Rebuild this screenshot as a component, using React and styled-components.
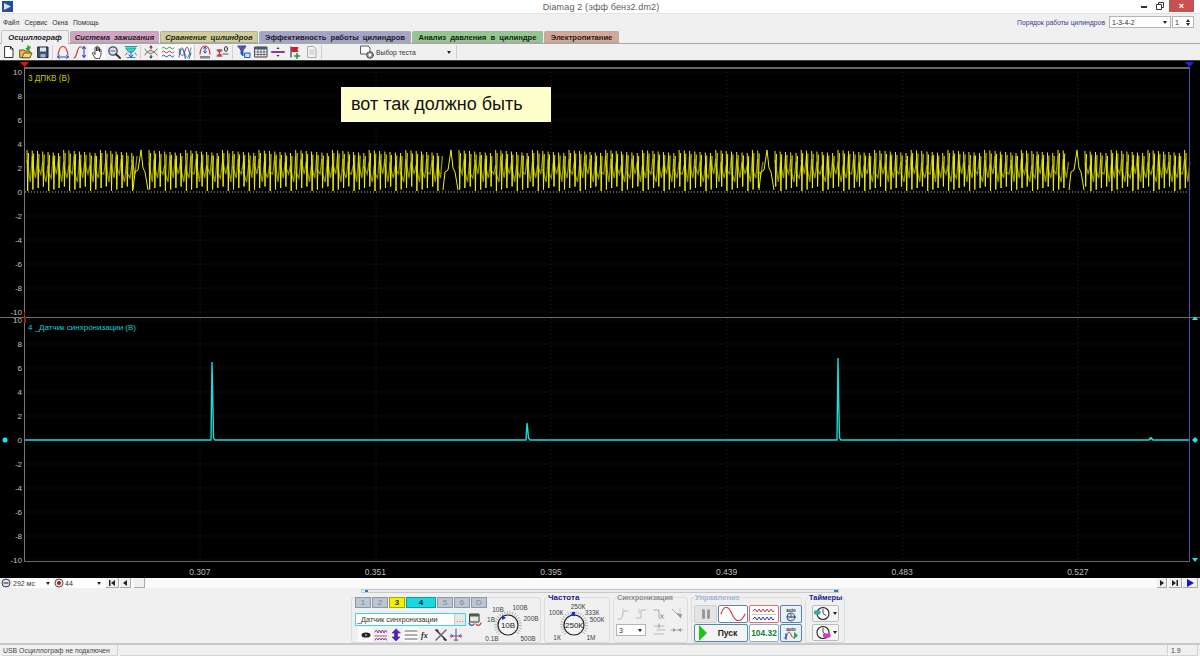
import React from 'react';
import styled, { createGlobalStyle } from 'styled-components';

const Global = createGlobalStyle`
  html, body { margin: 0; padding: 0; background: #f0f0f0; overflow: hidden; }
  * { box-sizing: border-box; }
`;
const Root = styled.div`
  width: 1200px; height: 656px; display: flex; flex-direction: column; background: #f0f0f0;
  font-family: "Liberation Sans", Arial, sans-serif; font-size: 7px; color: #333; overflow: hidden;
`;
const TitleBar = styled.div`
  height: 14px; background: #fff; display: grid; grid-template-columns: 1fr auto 1fr; align-items: center;
  padding-left: 2px; border-bottom: 1px solid #e4e4e4;
`;
const Title = styled.div`font-size: 9px; color: #5c5c5c; margin-top: 1px; letter-spacing: 0.15px;`;
const WinButtons = styled.div`justify-self: end; display: flex; align-items: flex-start; height: 13px; padding-right: 6px;`;
const WinBtn = styled.div`width: 16px; height: 12px; display: flex; align-items: center; justify-content: center;`;
const CloseBtn = styled.div`
  width: 25px; height: 12px; margin-left: 1px; background: #c75050; color: #fff; font-size: 9px; font-weight: bold;
  display: flex; align-items: center; justify-content: center;
`;
const MenuBar = styled.div`height: 16px; display: flex; align-items: center; padding-left: 3px; gap: 5px;`;
const MenuItem = styled.span`color: #333; font-size: 6.7px;`;
const Spacer = styled.div`flex: 1;`;
const OrderLabel = styled.span`color: #3a3a9c; font-size: 6.8px; margin-right: 3px;`;
const SelectBox = styled.div`
  width: ${p => p.$w}px; height: ${p => p.$h || 12}px; background: #fff; border: 1px solid ${p => p.$border || '#b4b4b4'};
  display: flex; align-items: center; justify-content: space-between; padding: 0 3px 0 2px; font-size: 7px; color: #333;
`;
const Caret = styled.i`
  width: 0; height: 0; border-left: 2.5px solid transparent; border-right: 2.5px solid transparent;
  border-top: 3px solid #222; display: block;
`;
const SpinWrap = styled.div`display: flex; flex-direction: column; gap: 1px;`;
const CaretUp = styled(Caret)`border-top: 0; border-bottom: 3px solid #222;`;
const RightControls = styled.div`display: flex; align-items: center; gap: 1px; padding-right: 6px;`;
const TabRow = styled.div`height: 14px; display: flex; align-items: flex-end; padding-left: 1px; gap: 1px; position: relative; border-bottom: 1px solid #a8a8a8;`;
const Tab = styled.div`
  width: ${p => p.$w}px; height: ${p => p.$active ? 14 : 12}px; background: ${p => p.$bg};
  border: 1px solid ${p => p.$active ? '#c4c4c4' : '#b0b0b0'}; border-bottom: ${p => p.$active ? '0' : '1px solid #a8a8a8'};
  margin-bottom: ${p => p.$active ? -1 : 0}px; position: relative;
  border-radius: 2px 2px 0 0; font-size: 7.6px; font-weight: bold; font-style: ${p => p.$it ? 'italic' : 'normal'};
  color: #1c1c1c; display: flex; align-items: center; justify-content: center; white-space: nowrap; word-spacing: 2px;
`;
const Toolbar = styled.div`height: 16px; display: flex; align-items: center; padding-left: 0; background: #f0f0f0;`;
const TB = styled.div`
  width: ${p => p.$w || 17}px; height: 15px; display: flex; align-items: center; justify-content: center; flex: none;
  background: ${p => p.$on ? '#fafafa' : 'transparent'};
`;
const Sep = styled.div`width: 1px; height: 14px; background: #d0d0d0; margin: 0 ${p => p.$m || 1}px; flex: none;`;
const TestPick = styled.div`
  width: 79px; display: flex; align-items: center; font-size: 6.8px; color: #333; gap: 3px; flex: none; padding-right: 4px;
`;
const TestLabel = styled.span`flex: 1; white-space: nowrap;`;
const Plot = styled.div`height: 518px; background: #000; position: relative; border-top: 1px solid #444; flex: none;`;
const PaneSvg = styled.svg`display: block;`;
const Note = styled.div`
  position: absolute; left: 341px; top: 26px; width: 210px; height: 35px; background: #ffffcc; color: #111;
  font-size: 18px; padding-left: 10px; display: flex; align-items: center;
`;
const XAxis = styled.div`
  height: 13px; display: grid; grid-template-columns: repeat(6, 175.6px); padding-left: 112px; color: #bdbdbd; font-size: 8.5px;
  align-items: center; text-align: center;
`;
const NavRow = styled.div`height: 10px; background: #fafafa; display: flex; align-items: center; flex: none;`;
const NavIcon = styled.div`width: ${p => p.$w || 12}px; height: 10px; display: flex; align-items: center; justify-content: center; background: #f0f0f0; flex: none;`;
const NavSelect = styled.div`
  width: ${p => p.$w}px; height: 10px; background: #fff; display: flex; align-items: center; justify-content: space-between;
  padding: 0 3px 0 1px; font-size: 7px; color: #333; flex: none;
`;
const NavBtn = styled.div`
  width: ${p => p.$w || 12}px; height: 10px; margin-left: ${p => p.$ml || 0}px; background: #f0f0f0;
  border-right: 1px solid #aaa; border-bottom: 1px solid #aaa; display: flex; align-items: center; justify-content: center; flex: none;
`;
const Track = styled.div`flex: 1; height: 10px; background: #fbfbfb;`;
const Workspace = styled.div`flex: 1; display: flex; flex-direction: column; padding-left: 351px; min-height: 0;`;
const Slider = styled.div`
  width: 478px; height: 4px; margin: 1px 0 0 10px; background: #e4ecf5; border: 1px solid #c8c8c8; position: relative;
`;
const SliderDotL = styled.i`position: absolute; left: 3px; top: 0; width: 3px; height: 2px; background: #3a6fd0;`;
const SliderDotR = styled.i`position: absolute; right: 0; top: 0; width: 4px; height: 2px; background: #3a6fd0;`;
const Panels = styled.div`display: flex; gap: 3px; margin-top: 4px; align-items: flex-start;`;
const Group = styled.div`
  width: ${p => p.$w}px; height: 46px; border: 1px solid #dcdcdc; border-radius: 3px; position: relative; flex: none;
`;
const GroupTitle = styled.div`
  position: absolute; left: ${p => p.$l || 2}px; top: -5px; font-size: ${p => p.$s || 8}px; font-weight: bold; background: #f0f0f0; padding: 0 1px;
  color: ${p => p.$c}; white-space: nowrap;
`;
const ChannelInner = styled.div`display: flex; height: 100%;`;
const ChannelCol = styled.div`width: 135px; display: flex; flex-direction: column; padding: 0 0 0 3px; margin-top: -1px;`;
const ChanRow = styled.div`display: flex; gap: 1px; height: 11px; margin-bottom: 5px;`;
const Chan = styled.div`
  width: ${p => p.$w || 16}px; height: 11px; background: ${p => p.$bg || '#bcc6d2'}; border: 1px solid ${p => p.$b || '#8b9aab'};
  color: ${p => p.$fg || '#858585'}; font-size: 8px; font-weight: ${p => p.$bold ? 'bold' : 'normal'};
  display: flex; align-items: center; justify-content: center;
`;
const ComboRow = styled.div`display: flex; align-items: center; gap: 2px; height: 13px;`;
const Combo = styled.div`
  width: 111px; height: 13px; background: #fff; border: 1px solid #40d8e0; display: flex; align-items: center; justify-content: space-between;
  font-size: 7.3px; padding-left: 1px; color: #333; white-space: nowrap;
`;
const ComboBtn = styled.div`width: 11px; height: 11px; background: #e8e8e8; border-left: 1px solid #ccc; display: flex; align-items: center; justify-content: center; color: #555; font-size: 8px;`;
const IconRow = styled.div`display: flex; align-items: center; margin: 1px 0 0 3px; height: 15px;`;
const IconCell = styled(TB)`width: 15px;`;
const Knob = styled.svg`display: block; flex: none; overflow: visible;`;
const GroupFlex = styled.div`display: flex; justify-content: center; padding-top: 0;`;
const SyncGrid = styled.div`
  display: grid; grid-template-columns: repeat(4, 18px); grid-auto-rows: 16px; align-items: center; justify-items: center;
  padding: 8px 0 0 0;
`;
const SyncSelect = styled(SelectBox)`grid-column: span 2; justify-self: start; margin-left: 2px;`;
const CtlGrid = styled.div`
  display: grid; grid-template-columns: 23px 30px 30px 22px; grid-template-rows: 18px 18px; gap: 1px; padding: 7px 0 0 2px;
`;
const CtlBtn = styled.div`
  grid-column: ${p => p.$span ? `span ${p.$span}` : 'auto'};
  background: ${p => p.$bg || '#fff'}; border: 1px solid ${p => p.$b || '#5d84a8'}; border-radius: 2px;
  display: flex; align-items: center; justify-content: center; gap: ${p => p.$gap || 0}px;
`;
const PlaySlot = styled.span`width: 3px;`;
const Pusk = styled.span`flex: 1; text-align: center; font-size: 8.5px; font-weight: bold; color: #222;`;
const Freq = styled.span`font-size: 8.4px; font-weight: bold; color: #0a7f30;`;
const TimerCol = styled.div`display: flex; flex-direction: column; gap: 2px; align-items: center; padding-top: 7px;`;
const TimerBtn = styled.div`
  width: 27px; height: 17px; background: #f5f5f5; border: 1px solid #bcbcbc; border-radius: 2px; display: flex; align-items: center; justify-content: center; gap: 2px;
`;
const StatusBar = styled.div`height: 13px; border-top: 2px solid #c8c8c8; display: flex; gap: 2px; padding: 0 2px; flex: none;`;
const StatusCell = styled.div`
  width: ${p => p.$w ? `${p.$w}px` : 'auto'}; flex: ${p => p.$w ? 'none' : 1}; border: 1px solid #d4d4d4; border-width: 0 1px 1px 0;
  font-size: 6.9px; color: #444; display: flex; align-items: center; padding-left: 1px; white-space: nowrap;
`;

const I = ({ w = 14, h = 14, children }) => (
  <svg width={w} height={h} viewBox={`0 0 ${w} ${h}`} fill="none" strokeLinecap="round" strokeLinejoin="round">{children}</svg>
);
const R = '#d23a3a', B = '#2255cc', G = '#2a9a5a', P = '#8a3aa8', C = '#18a0a8', K = '#333';

const Icons = {
  file: <I><path d="M3 1.500h5.500L11 4v8.500H3z" fill="#fff" stroke={K} /><path d="M8.500 1.500V4H11" stroke={K} /></I>,
  open: <I><path d="M1 5h4l1 1h5v6.500H1z" fill="#e8b84a" stroke="#6b5518" /><path d="M3 12.500 5 8h8l-2 4.500z" fill="#f5d67a" stroke="#6b5518" /><path d="M9 1v4M7.500 3.500 9 5l2-3" stroke="#2a9a2a" strokeWidth="1.600" /></I>,
  save: <I><path d="M2 2h10v10.500H2z" fill="#3d5575" stroke="#223" /><path d="M4 2.500h6v4H4z" fill="#dfe6ee" /><path d="M4.500 9h5v3.500h-5z" fill="#9fb2c8" /></I>,
  arc: <I><path d="M2 10C3 3 5 1.500 7 1.500S11 3 12 10" stroke={R} strokeWidth="1.200" /><path d="M1.500 12h11M1.500 12l2-1.500M1.500 12l2 1.500M12.500 12l-2-1.500M12.500 12l-2 1.500" stroke={B} /></I>,
  arcV: <I><path d="M1 13C4 13 4 2 7 2c1 0 1.500 0 2 0" stroke={R} strokeWidth="1.200" /><path d="M11 1.500v11M11 1.500 9.500 3.500M11 1.500l1.500 2M11 12.500l-1.500-2M11 12.500l1.500-2" stroke={B} strokeWidth="1.100" /></I>,
  hand: <I><path d="M5 13 2.500 8.500c-.5-1 .8-1.500 1.500-.5l1 1.500V3c0-1 1.500-1 1.500 0v3-4c0-1 1.500-1 1.500 0v4-3c0-1 1.500-1 1.500 0v4-2c0-1 1.500-1 1.500 0v4c0 2-1 3-1.500 4.500z" fill="#fff" stroke="#333" strokeWidth=".9" /></I>,
  zoom: <I><circle cx="6" cy="6" r="4.200" fill="#cfe4f5" stroke="#34506a" strokeWidth="1.300" /><path d="M9 9.200l4 3.800" stroke="#333" strokeWidth="2" /><path d="M4 6h4" stroke={R} /></I>,
  cyanFit: <I><path d="M2 3h10L9 7H5z" fill="#3ad6c6" stroke={C} /><path d="M1 1.500h12M3 12.500h8" stroke={C} /><path d="M7 7v5M5 10l2 2.500 2-2.500" stroke={B} /><path d="M3 8l-1.500 2M11 8l1.500 2" stroke={R} /></I>,
  cross: <I><path d="M1 4C4 10 9 10 13 4" stroke={G} /><path d="M1 10C4 4 9 4 13 10" stroke={R} /><path d="M7 1v3M7 10v3" stroke={K} /><path d="M6 2.500 7 1l1 1.500M6 11.500 7 13l1-1.500" stroke={K} /></I>,
  waves3: <I><path d="M1 3q1.500-2 3 0t3 0 3 0 3 0" stroke={G} /><path d="M1 7q1.500-2 3 0t3 0 3 0 3 0" stroke={R} /><path d="M1 11q1.500-2 3 0t3 0 3 0 3 0" stroke={B} /></I>,
  wavesOver: <I><path d="M1 12C3 1 5 1 7 12s4 1 6-4" stroke={B} /><path d="M1 8c2-8 4-6 6 1s4 3 6-6" stroke={G} /><path d="M1 4c2 8 4 9 6 2s3-4 5 4" stroke={P} /></I>,
  auto: <I><path d="M2 9C2 3 5 1 7 1s5 2 5 8" stroke={R} strokeWidth="1.200" /><path d="M7 2v6M5.500 3.500 7 2l1.500 1.500M5.500 6.500 7 8l1.500-1.500" stroke={B} /><path d="M2 11h10v2.500H2z" fill="#888" /></I>,
  sigma: <I><path d="M2 5h5M2 11h5" stroke={K} /><path d="M4.500 5v6M3 6.500 4.500 5 6 6.500M3 9.500 4.500 11 6 9.500" stroke={R} strokeWidth="1.200" /><path d="M8 9h5" stroke="#555" /><ellipse cx="11" cy="4" rx="1.500" ry="2.500" stroke="#333" /></I>,
  filter: <I><path d="M1 1h8L6 5.500V11L4 9V5.500z" fill={B} stroke={B} /><path d="M3 1.500l3 3" stroke={R} strokeWidth="1.300" /><path d="M8 8h5v4.500H8z" fill="#cfe0f4" stroke={B} /></I>,
  table: <I><path d="M1 2h12v10H1z" fill="#fff" stroke="#444" /><path d="M1 2h12v2.500H1z" fill="#3c5a96" /><path d="M4 2v10M7 2v10M10 2v10M1 7h12M1 9.500h12" stroke="#555" strokeWidth=".8" /></I>,
  divide: <I><path d="M1 7h12" stroke={P} strokeWidth="2" /><path d="M5.500 4 7 2l1.500 2zM5.500 10 7 12l1.500-2z" fill="#333" /></I>,
  flag: <I><path d="M3 2v10" stroke="#444" strokeWidth="1.300" /><path d="M3.500 2h7l-1 2.500 1 2.500h-7z" fill="#d81830" /><path d="M9 8.500v5M6.500 11h5" stroke="#1a9a2a" strokeWidth="1.500" /></I>,
  page: <I><path d="M3 1.500h5.500L11 4v8.500H3z" fill="#f4f4f4" stroke="#a8a8a8" /><path d="M5 5h4M5 7h4M5 9h4" stroke="#bdbdbd" /></I>,
  gear: <I w={18}><path d="M3 1h7l2 2v6H3z" fill="#fff" stroke="#555" /><circle cx="12" cy="10" r="3.300" fill="#aaa" stroke="#444" /><circle cx="12" cy="10" r="1.200" fill="#fff" /></I>,
  eye: <I><ellipse cx="7" cy="7" rx="4.500" ry="2.600" fill="#222" /><circle cx="7" cy="7" r="1.200" fill="#888" /></I>,
  noise: <I><path d="M1 4l1.500-2 1.500 3 1.500-3 1.500 3 1.500-3 1.500 3 1.500-3 1 2" stroke={P} /><path d="M1 8h12" stroke={R} strokeDasharray="1.500 1" /><path d="M1 12l1.500-2 1.500 2 1.500-2 1.500 2 1.500-2 1.500 2 1.500-2 1 2" stroke={P} /></I>,
  updown: <I><path d="M7 1 3 5h2.500v4H3l4 4 4-4H8.500V5H11z" fill="#3a2ab8" stroke="#7a1a9a" strokeWidth=".7" /></I>,
  lines: <I><path d="M1 3h12M1 7h12M1 11h12" stroke="#666" strokeWidth="1.100" /></I>,
  tools: <I><path d="M2 2l10 10" stroke="#445" strokeWidth="1.600" /><path d="M12 2 2 12" stroke="#7a6a78" strokeWidth="1.600" /><path d="M2 2h2v2M12 12h-2v-2" stroke="#223" /></I>,
  axis: <I><path d="M1 8h12" stroke={R} /><path d="M7 1v12" stroke={B} /><path d="M2 6.500 4 8 2 9.500M12 6.500 10 8l2 1.500" stroke={B} /><path d="M5 12h4" stroke={R} /></I>,
  meter: <I><path d="M2 1h9v8H2z" fill="#e8e8e8" stroke="#333" /><path d="M2 1h9v2.500H2z" fill="#3a6a3a" /><path d="M1 10c1 3 4 3 5 1" stroke={B} strokeWidth="1.300" /><path d="M13 10c-1 3-4 3-5 1" stroke={R} strokeWidth="1.300" /></I>,
  s1: <I><path d="M2 12h3c2 0 1-8 4-8h3" stroke="#b8b8b8" /><path d="M7 1v6" stroke="#c8c8c8" /></I>,
  s2: <I><path d="M2 11h5V3h5" stroke="#b8b8b8" /><path d="M5 2v5" stroke="#c8c8c8" /></I>,
  s3: <I><path d="M2 3h5v8h5" stroke="#aaa" /><path d="M9 8l1 2 1-2" stroke="#888" /></I>,
  s4: <I><path d="M2 2l9 9" stroke="#aaa" /><path d="M6 6l5 5 1-4z" fill="#999" /><path d="M10 1v5" stroke="#ccc" /></I>,
  s5: <I><path d="M2 3h10M5 7h8M2 11h10" stroke="#b8b8b8" /><path d="M7 1v4" stroke="#999" /></I>,
  s6: <I><path d="M1 7h12" stroke="#b0b0b0" /><path d="M3 5l3 2-3 2zM11 5 8 7l3 2z" fill="#999" /></I>,
};

const Pause = () => <I w={12} h={14}><rect x="2" y="2" width="3" height="10" rx="1.500" fill="#9a9a9a" /><rect x="7" y="2" width="3" height="10" rx="1.500" fill="#9a9a9a" /></I>;
const SineBtn = () => <I w={26} h={14}><path d="M1 7C4-2 8-2 12 7s9 9 13 0" stroke="#d23a3a" strokeWidth="1.100" /></I>;
const DoubleWave = () => <I w={26} h={15}><path d="M2 4l2-2 2 3 2-3 2 3 2-3 2 3 2-3 2 3 2-3 2 3 1-1" stroke="#c83a3a" /><path d="M1 7.500h24" stroke="#c8c8c8" /><path d="M2 12l2-2 2 3 2-3 2 3 2-3 2 3 2-3 2 3 2-3 2 3 1-1" stroke="#2a3ac8" /></I>;
const AutoLabel = () => <text x="8" y="4.500" fontSize="4.500" fontWeight="bold" textAnchor="middle" fill="#333" fontFamily="Liberation Sans, Arial, sans-serif">auto</text>;
const AutoTop = () => <I w={16} h={15}><AutoLabel /><circle cx="8" cy="10" r="4" fill="#cfe0f0" stroke="#34506a" /><path d="M8 10V7.500" stroke="#c83a3a" /><path d="M4 10h8" stroke="#2a3ac8" /></I>;
const AutoRun = () => <I w={16} h={15}><AutoLabel /><path d="M1 12c3 2 3-6 5-6s2 6 5 6" stroke="#c83a3a" /><path d="M3 8v5" stroke="#2255cc" strokeWidth="1.500" /><path d="M11 6v7l4-3.500z" fill="#1fae3c" /></I>;
const Play = () => <I w={10} h={16}><path d="M1 0v16l8-8z" fill="#18c818" /></I>;
const Clock = ({ mark, markPos }) => (
  <I w={17} h={15}>
    <circle cx="9" cy="7.500" r="6" fill="#fff" stroke="#222" strokeWidth="1.100" />
    <path d="M9 3v4.500l3 2" stroke="#444" />
    <path d={markPos} fill={mark} stroke={mark} />
  </I>
);
const Glyph = ({ d, c = '#222' }) => <I w={8} h={8}><path d={d} fill={c} /></I>;

const TABS = [
  { t: 'Осциллограф', w: 68, bg: '#f0f0f0', active: true, it: true },
  { t: 'Система зажигания', w: 89, bg: '#d3a2c6', it: true },
  { t: 'Сравнение цилиндров', w: 98, bg: '#d0cd96', it: true },
  { t: 'Эффективность работы цилиндров', w: 152, bg: '#a6a3cb' },
  { t: 'Анализ давления в цилиндре', w: 131, bg: '#90c98b' },
  { t: 'Электропитание', w: 75, bg: '#d6a794' },
];

const TICKS_X = [200, 376, 551, 727, 903, 1078];
const yLabel = [10, 8, 6, 4, 2, 0, -2, -4, -6, -8, -10];

function yellowPaths() {
  const gaps = [141, 451, 767, 1077];
  const step = 5.24;
  let bright = '', dim = '';
  let x = 27, i = 0;
  while (x < 1187) {
    const g = gaps.find(v => x > v - 9 && x < v + 8);
    if (g !== undefined) {
      bright += `M${g - 8} 190 L${g - 6} 172 L${g - 3} 170 L${g} 150 L${g + 2} 168 L${g + 4} 172 L${g + 7} 190 `;
      x = g + 8;
      continue;
    }
    const top = 150 + (i % 7) * 0.5;
    const bot = 191 - (i % 4) * 1.5;
    bright += `M${x.toFixed(1)} ${top} L${(x + 0.7).toFixed(1)} ${bot} L${(x + 1.5).toFixed(1)} ${top + 3} `;
    const m = x + step / 2;
    dim += `M${x.toFixed(1)} ${160 + (i % 5) * 3} L${(m + 0.7).toFixed(1)} ${182 - (i % 3) * 4} L${(x + step).toFixed(1)} ${156 + (i % 4) * 3} `;
    x += step;
    i++;
  }
  return { bright, dim };
}
const Y = yellowPaths();

function cyanPath() {
  const spikes = [[212, 362, 400], [527, 423, 430], [838, 358, 405], [1150, 438, 439]];
  let d = 'M25 440 ';
  for (const [sx, sy, mid] of spikes) {
    d += `L${sx - 1} 440 L${sx} ${sy} L${sx + 0.8} ${mid} L${sx + 1.500} 438 L${sx + 3} 440 `;
  }
  d += 'L1189 440';
  return d;
}

const Grid = ({ y0, yEnd, offset }) => (
  <g stroke="#232323" strokeDasharray="1 3">
    {TICKS_X.map(x => <line key={x} x1={x} x2={x} y1={y0} y2={yEnd} />)}
    {yLabel.map(v => <line key={v} x1={25} x2={1188} y1={offset - v * 12} y2={offset - v * 12} />)}
  </g>
);
const Labels = ({ offset }) => (
  <g fill="#c4c4c4" fontSize="8" textAnchor="end" fontFamily="Liberation Sans, Arial, sans-serif">
    {yLabel.map(v => <text key={v} x={22} y={offset - v * 12 + 3}>{v}</text>)}
  </g>
);

const PaneTop = () => (
  <PaneSvg width="1200" height="256" viewBox="0 61 1200 256">
    <Grid y0={68} yEnd={316} offset={192} />
    <line x1="25" x2="1189" y1="192" y2="192" stroke="#aaa" strokeDasharray="1 2" />
    <path d={Y.dim} stroke="#8f8f00" strokeWidth="1.300" fill="none" />
    <path d={Y.bright} stroke="#f0f000" strokeWidth="1" fill="none" />
    <rect x="24" y="67" width="1165" height="2" fill="#666" />
    <rect x="24" y="67" width="1" height="250" fill="#777" />
    <rect x="1189" y="67" width="1" height="250" fill="#5050b0" />
    <path d="M20 62h9l-4.500 5z" fill="#e01010" />
    <path d="M1185 62h9l-4.500 5z" fill="#2020f0" />
    <rect x="24" y="312" width="1" height="4" fill="#c01010" />
    <Labels offset={192} />
    <text x="28" y="81" fill="#c8c800" fontSize="8.200" fontFamily="Liberation Sans, Arial, sans-serif">3 ДПКВ (В)</text>
  </PaneSvg>
);
const PaneBottom = () => (
  <PaneSvg width="1200" height="248" viewBox="0 317 1200 248">
    <Grid y0={318} yEnd={562} offset={440} />
    <path d={cyanPath()} stroke="#12dede" strokeWidth="1.400" fill="none" />
    <rect x="0" y="317" width="1200" height="1" fill="#6e6e6e" />
    <rect x="24" y="317" width="1" height="245" fill="#777" />
    <rect x="1189" y="317" width="1" height="245" fill="#5050b0" />
    <rect x="24" y="561" width="1166" height="1" fill="#666" />
    <rect x="24" y="317" width="2" height="6" fill="#a01818" />
    <circle cx="5" cy="440" r="2.500" fill="#18e8f0" />
    <path d="M1195 437l3 3-3 3-3-3z" fill="#18e8f0" />
    <path d="M1192 320h6l-3-4z" fill="#18e8f0" />
    <path d="M1192 558h6l-3 4z" fill="#18e8f0" />
    <Labels offset={440} />
    <text x="28" y="330" fill="#10cfcf" fontSize="8" fontFamily="Liberation Sans, Arial, sans-serif">4 _Датчик синхронизации (В)</text>
  </PaneSvg>
);

const Dial = ({ w, h, cx, cy, center, labels, needle }) => {
  const ticks = [];
  for (let a = 135; a <= 405; a += 12) {
    const rad = (a * Math.PI) / 180;
    ticks.push(<line key={a} x1={cx + Math.cos(rad) * 11} y1={cy + Math.sin(rad) * 11} x2={cx + Math.cos(rad) * 14} y2={cy + Math.sin(rad) * 14} stroke="#b0b0b0" />);
  }
  return (
    <Knob width={w} height={h} viewBox={`0 0 ${w} ${h}`}>
      {ticks}
      <circle cx={cx} cy={cy} r="10" fill="#f4f4f4" stroke="#222" strokeWidth="1.200" />
      <path d={needle} fill="#2030d0" />
      <text x={cx} y={cy + 3} fontSize="8" textAnchor="middle" fill="#222" fontFamily="Liberation Sans, Arial, sans-serif">{center}</text>
      {labels.map(([t, x, y]) => (
        <text key={t} x={x} y={y} fontSize="6.500" fill="#444" textAnchor="middle" fontFamily="Liberation Sans, Arial, sans-serif">{t}</text>
      ))}
    </Knob>
  );
};

export default function App() {
  return (
    <Root>
      <Global />
      <TitleBar>
        <svg width="11" height="11" viewBox="0 0 11 11"><rect width="11" height="11" fill="#1f4fa0" /><path d="M2 2l7 3.500-7 3.500z" fill="#cfe2ff" /><path d="M1 9h4" stroke="#d03030" /></svg>
        <Title>Diamag 2 (эфф бенз2.dm2)</Title>
        <WinButtons>
          <WinBtn><svg width="6" height="3"><rect y="1" width="6" height="2" fill="#333" /></svg></WinBtn>
          <WinBtn><svg width="8" height="8"><path d="M.5 2.500h5v5h-5zM2.500 2.500v-2h5v5h-2" stroke="#333" fill="none" /></svg></WinBtn>
          <CloseBtn>×</CloseBtn>
        </WinButtons>
      </TitleBar>
      <MenuBar>
        <MenuItem>Файл</MenuItem><MenuItem>Сервис</MenuItem><MenuItem>Окна</MenuItem><MenuItem>Помощь</MenuItem>
        <Spacer />
        <RightControls>
          <OrderLabel>Порядок работы цилиндров</OrderLabel>
          <SelectBox $w={62}>1-3-4-2<Caret /></SelectBox>
          <SelectBox $w={22}>1<SpinWrap><CaretUp /><Caret /></SpinWrap></SelectBox>
        </RightControls>
      </MenuBar>
      <TabRow>
        {TABS.map(t => <Tab key={t.t} $w={t.w} $bg={t.bg} $active={t.active} $it={t.it}>{t.t}</Tab>)}
      </TabRow>
      <Toolbar>
        <TB $w={17}>{Icons.file}</TB><TB>{Icons.open}</TB><TB>{Icons.save}</TB>
        <Sep />
        <TB>{Icons.arc}</TB><TB>{Icons.arcV}</TB><TB $on>{Icons.hand}</TB><TB>{Icons.zoom}</TB><TB>{Icons.cyanFit}</TB>
        <Sep />
        <TB>{Icons.cross}</TB><TB $on>{Icons.waves3}</TB><TB $on>{Icons.wavesOver}</TB>
        <Sep />
        <TB>{Icons.auto}</TB><TB>{Icons.sigma}</TB>
        <Sep $m={2} />
        <TB>{Icons.filter}</TB><TB>{Icons.table}</TB><TB>{Icons.divide}</TB><TB>{Icons.flag}</TB><TB>{Icons.page}</TB>
        <Sep />
        <TB $w={35}>&nbsp;</TB>
        <TB $w={18}>{Icons.gear}</TB>
        <TestPick><TestLabel>Выбор теста</TestLabel><Caret /></TestPick>
        <Sep />
      </Toolbar>
      <Plot>
        <PaneTop />
        <PaneBottom />
        <XAxis>{['0.307', '0.351', '0.395', '0.439', '0.483', '0.527'].map(t => <span key={t}>{t}</span>)}</XAxis>
        <Note>вот так должно быть</Note>
      </Plot>
      <NavRow>
        <NavIcon><svg width="10" height="10"><circle cx="5" cy="5" r="4" fill="#dfe4ea" stroke="#34405a" /><path d="M2.500 5h5" stroke="#222" /></svg></NavIcon>
        <NavSelect $w={41}>292 мс<Caret /></NavSelect>
        <NavIcon $w={1} />
        <NavIcon $w={10}><svg width="10" height="10"><circle cx="5" cy="5" r="4" fill="#e8e8e8" stroke="#555" /><circle cx="5" cy="5" r="2" fill="#c01818" /></svg></NavIcon>
        <NavSelect $w={40}>44<Caret /></NavSelect>
        <NavBtn $w={13} $ml={2}><Glyph d="M1 1h1.500v6H1zM7 1v6L3 4z" /></NavBtn>
        <NavBtn $w={11} $ml={1}><Glyph d="M6 1v6L2 4z" /></NavBtn>
        <NavBtn $w={11} $ml={3} />
        <Track />
        <NavBtn $w={10}><Glyph d="M2 1v6l4-3z" /></NavBtn>
        <NavBtn $w={13} $ml={2}><Glyph d="M1 1v6l4-3zM5.500 1H7v6H5.500z" /></NavBtn>
        <NavBtn $w={15} $ml={1}><Glyph d="M1 0v8l7-4z" c="#1010e0" /></NavBtn>
        <NavIcon $w={2} />
      </NavRow>
      <Workspace>
        <Slider><SliderDotL /><SliderDotR /></Slider>
        <Panels>
          <Group $w={190}>
            <ChannelInner>
              <ChannelCol>
                <ChanRow>
                  <Chan>1</Chan><Chan>2</Chan>
                  <Chan $bg="#f2f200" $b="#a8a800" $fg="#333" $bold>3</Chan>
                  <Chan $w={30} $bg="#19d8e0" $b="#109aa8" $fg="#111" $bold>4</Chan>
                  <Chan>5</Chan><Chan>6</Chan><Chan>D</Chan>
                </ChanRow>
                <ComboRow>
                  <Combo>_Датчик синхронизации<ComboBtn>…</ComboBtn></Combo>
                  <TB $w={14}>{Icons.meter}</TB>
                </ComboRow>
                <IconRow>
                  <IconCell $on>{Icons.eye}</IconCell><IconCell>{Icons.noise}</IconCell><IconCell>{Icons.updown}</IconCell><IconCell $on>{Icons.lines}</IconCell>
                  <IconCell><svg width="12" height="10"><text x="1" y="8" fontSize="8" fontStyle="italic" fontWeight="bold" fill="#222" fontFamily="Liberation Serif, serif">fx</text></svg></IconCell>
                  <IconCell>{Icons.tools}</IconCell><IconCell>{Icons.axis}</IconCell>
                </IconRow>
              </ChannelCol>
              <Dial w={53} h={46} cx={21} cy={27} center="10В" needle="M15 17l4 3-4 2z"
                labels={[['10В', 11, 14], ['100В', 33, 12], ['1В', 4, 24], ['200В', 44, 23], ['0.1В', 5, 43], ['500В', 41, 43]]} />
            </ChannelInner>
          </Group>
          <Group $w={66}>
            <GroupTitle $c="#1a1a90">Частота</GroupTitle>
            <GroupFlex>
              <Dial w={64} h={44} cx={29} cy={27} center="250К" needle="M27 14l3 0 0 4-4 0z"
                labels={[['250К', 33, 11], ['100К', 11, 17], ['333К', 47, 17], ['500К', 52, 24], ['1К', 12, 42], ['1М', 46, 42]]} />
            </GroupFlex>
          </Group>
          <Group $w={75}>
            <GroupTitle $c="#8a8a8a" $s={7.2}>Синхронизация</GroupTitle>
            <SyncGrid>
              {Icons.s1}{Icons.s2}{Icons.s3}{Icons.s4}
              <SyncSelect $w={30}>3<Caret /></SyncSelect>
              {Icons.s5}{Icons.s6}
            </SyncGrid>
          </Group>
          <Group $w={111}>
            <GroupTitle $c="#a0b4d0" $s={7.6}>Управление</GroupTitle>
            <CtlGrid>
              <CtlBtn $bg="#e4e4e4" $b="#d0d0d0"><Pause /></CtlBtn>
              <CtlBtn><SineBtn /></CtlBtn>
              <CtlBtn $b="#e07070"><DoubleWave /></CtlBtn>
              <CtlBtn $bg="#e8f0f8"><AutoTop /></CtlBtn>
              <CtlBtn $span={2} $bg="#f4f4f4"><PlaySlot /><Play /><Pusk>Пуск</Pusk></CtlBtn>
              <CtlBtn $b="#80b0d8"><Freq>104.32</Freq></CtlBtn>
              <CtlBtn $bg="#e8f0f8"><AutoRun /></CtlBtn>
            </CtlGrid>
          </Group>
          <Group $w={40}>
            <GroupTitle $c="#1a1a90" $s={7.4}>Таймеры</GroupTitle>
            <TimerCol>
              <TimerBtn><Clock mark="#28b0a0" markPos="M1 5h5v3H1z" /><Caret /></TimerBtn>
              <TimerBtn><Clock mark="#e030d0" markPos="M10 9h6v3h-6z" /><Caret /></TimerBtn>
            </TimerCol>
          </Group>
        </Panels>
      </Workspace>
      <StatusBar>
        <StatusCell $w={116}>USB Осциллограф не подключен</StatusCell>
        <StatusCell />
        <StatusCell $w={28}>1.9</StatusCell>
      </StatusBar>
    </Root>
  );
}
